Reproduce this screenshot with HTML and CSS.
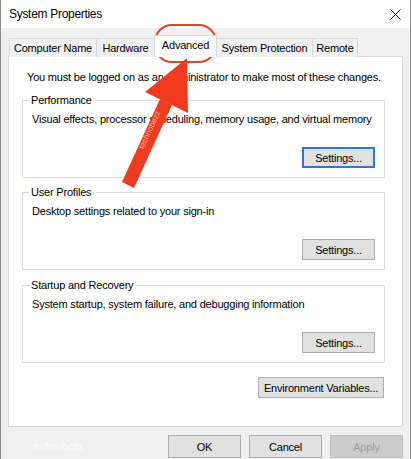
FILE: index.html
```html
<!DOCTYPE html>
<html lang="en">
  <head>
    <meta charset="UTF-8" />
    <meta name="viewport" content="width=device-width, initial-scale=1.0" />
    <title>System Properties</title>
    <link rel="stylesheet" href="styles.css">
  </head>
  <body>
    <div class="window">
      <div class="titlebar">
        <span class="title">System Properties</span>
        <svg class="close" width="11" height="11" viewBox="0 0 11 11">
          <path d="M0.5 0.5 L10.5 10.5 M10.5 0.5 L0.5 10.5" stroke="#111" stroke-width="1" fill="none" />
        </svg>
      </div>
      <div class="client">
        <ul class="tabs">
          <li class="tab tab-name">Computer Name</li>
          <li class="tab tab-hw">Hardware</li>
          <li class="tab tab-adv active">Advanced</li>
          <li class="tab tab-sp">System Protection</li>
          <li class="tab tab-remote">Remote</li>
        </ul>
        <div class="panel">
          <p class="note">You must be logged on as an Administrator to make most of these changes.</p>

          <fieldset class="group">
            <legend>Performance</legend>
            <p>Visual effects, processor scheduling, memory usage, and virtual memory</p>
            <div class="actions"><button class="btn default">Settings...</button></div>
          </fieldset>

          <fieldset class="group group-tight">
            <legend>User Profiles</legend>
            <p>Desktop settings related to your sign-in</p>
            <div class="actions"><button class="btn">Settings...</button></div>
          </fieldset>

          <fieldset class="group">
            <legend>Startup and Recovery</legend>
            <p>System startup, system failure, and debugging information</p>
            <div class="actions"><button class="btn">Settings...</button></div>
          </fieldset>

          <div class="env-row"><button class="btn btn-env">Environment Variables...</button></div>
        </div>
        <div class="footer">
          <span class="watermark">techno<b>bezz</b></span>
          <button class="btn btn-foot">OK</button>
          <button class="btn btn-foot">Cancel</button>
          <button class="btn btn-foot" disabled>Apply</button>
        </div>
      </div>
    </div>

    <!-- annotation drawn over the dialog -->
    <svg class="annotation" width="412" height="459" viewBox="0 0 412 459">
      <rect x="155" y="25" width="61" height="37" rx="17" ry="17" fill="none" stroke="#d9452f" stroke-width="2" />
      <polygon points="187,58 145,92 188,113" fill="#f03c1e" />
      <polygon points="160,99 172,105 134,188 122,182" fill="#f03c1e" />
      <text x="0" y="0" class="arrow-text" transform="translate(152,131) rotate(-65)">technobezz</text>
    </svg>
  </body>
</html>
```

FILE: styles.css
```css
body {
  margin: 0;
  position: relative;
  background: #fff;
  font-family: "Liberation Sans", Arial, sans-serif;
  font-size: 11px;
  letter-spacing: -0.2px;
  color: #000;
}
.window {
  width: 409px;
  height: 459px;
  border-left: 1px solid #8c8c8c;
  border-right: 1px solid #8c8c8c;
  display: flex;
  flex-direction: column;
}
.titlebar {
  height: 28px;
  display: flex;
  align-items: center;
  justify-content: space-between;
  padding: 0 9px 0 8px;
  background: #fff;
}
.title {
  font-size: 12px;
  letter-spacing: -0.3px;
}
.client {
  flex: 1;
  background: #f0f0f0;
  padding: 7px 7px 0 7px;
}

/* tabs */
.tabs {
  display: flex;
  align-items: flex-end;
  height: 22px;
  margin: 0 0 -1px 1px;
  padding: 0;
  list-style: none;
}
.tab {
  box-sizing: border-box;
  height: 19px;
  margin-right: -1px;
  border: 1px solid #d9d9d9;
  border-bottom: none;
  background: #f0f0f0;
  text-align: center;
  line-height: 18px;
}
.tab.active {
  position: relative;
  z-index: 1;
  height: 22px;
  padding-top: 1px;
  line-height: 16px;
  background: #fff;
}
.tab-name { width: 88px; }
.tab-hw { width: 59px; }
.tab-adv { width: 63px; }
.tab-sp { width: 97px; }
.tab-remote { width: 46px; }

/* page */
.panel {
  box-sizing: border-box;
  height: 371px;
  background: #fff;
  border: 1px solid #d9d9d9;
}
.note {
  margin: 13px 0 0 18px;
  line-height: 15px;
}
.group {
  margin: 8px 17px 0 13px;
  padding: 4px 9px 9px 9px;
  border: 1px solid #dcdcdc;
  min-width: 0;
}
.group-tight {
  margin-top: 7px;
}
.group legend {
  padding: 0 2px;
  margin-left: -3px;
  line-height: 15px;
}
.group p {
  margin: 0;
  line-height: 15px;
}
.actions {
  margin-top: 20px;
  text-align: right;
  line-height: 0;
}
.btn {
  box-sizing: border-box;
  width: 73px;
  height: 21px;
  padding: 0;
  border: 1px solid #adadad;
  background: #e1e1e1;
  font: inherit;
  letter-spacing: inherit;
  color: #000;
}
.btn.default {
  border: 2px solid #2a7ad0;
}
.env-row {
  margin: 14px 18px 0 0;
  text-align: right;
  line-height: 0;
}
.btn-env {
  width: 126px;
}

/* bottom buttons */
.footer {
  display: flex;
  justify-content: flex-end;
  align-items: center;
  gap: 8px;
  margin-top: 8px;
}
.btn-foot {
  height: 23px;
}
.btn-foot:disabled {
  background: #cccccc;
  border-color: #bfbfbf;
  color: #9d9d9d;
}
.watermark {
  margin-right: auto;
  margin-left: 25px;
  font-size: 10px;
  color: #fbfbfb;
}

.annotation {
  position: absolute;
  left: 0;
  top: 0;
  pointer-events: none;
}
.arrow-text {
  font-family: "Liberation Sans", Arial, sans-serif;
  font-size: 8px;
  letter-spacing: 0;
  fill: #f9b49c;
  text-anchor: middle;
}
```
